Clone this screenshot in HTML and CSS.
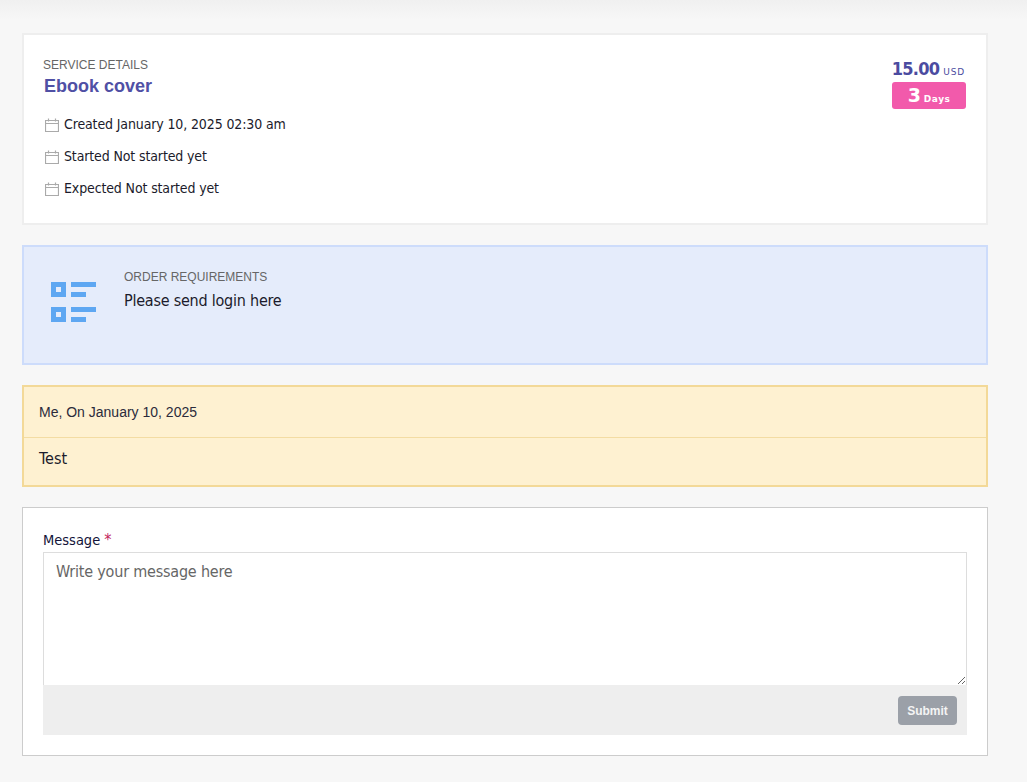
FILE: index.html
```html
<!DOCTYPE html>
<html lang="en">
<head>
<meta charset="utf-8">
<title>Order details</title>
<link rel="stylesheet" href="styles.css">
</head>
<body>
<main class="page">
  <section class="card service">
    <div class="service-main">
      <div class="eyebrow eyebrow-service">SERVICE DETAILS</div>
      <h1 class="service-title">Ebook cover</h1>
      <ul class="dates">
        <li class="date-row"><svg class="cal" viewBox="0 0 14 14" aria-hidden="true"><path d="M.5 2.5h13v11H.5zM.5 5.5h13M3.5 .5v3M10.5 .5v3"/></svg>Created January 10, 2025 02:30 am</li>
        <li class="date-row"><svg class="cal" viewBox="0 0 14 14" aria-hidden="true"><path d="M.5 2.5h13v11H.5zM.5 5.5h13M3.5 .5v3M10.5 .5v3"/></svg>Started Not started yet</li>
        <li class="date-row"><svg class="cal" viewBox="0 0 14 14" aria-hidden="true"><path d="M.5 2.5h13v11H.5zM.5 5.5h13M3.5 .5v3M10.5 .5v3"/></svg>Expected Not started yet</li>
      </ul>
    </div>
    <div class="price-box">
      <div class="price"><span class="amount">15.00</span><span class="currency">USD</span></div>
      <div class="days"><span class="days-num">3</span><span class="days-label">Days</span></div>
    </div>
  </section>

  <section class="requirements">
    <svg class="req-icon" viewBox="0 0 45 42" aria-hidden="true">
      <path fill-rule="evenodd" d="M0 0h15v15H0zM5 5v5h5V5zM0 25h15v15H0zM5 30v5h5v-5z"/>
      <path d="M20 0h25v5H20zM20 10h15v5H20zM20 25h25v5H20zM20 35h15v5H20z"/>
    </svg>
    <div class="req-body">
      <div class="eyebrow">ORDER REQUIREMENTS</div>
      <p class="req-text">Please send login here</p>
    </div>
  </section>

  <section class="note">
    <div class="note-head">Me, On January 10, 2025</div>
    <div class="note-body">Test</div>
  </section>

  <form class="reply">
    <label class="reply-label" for="msg">Message <span class="req-star">*</span></label>
    <textarea class="reply-input" id="msg" placeholder="Write your message here"></textarea>
    <div class="reply-bar"><button class="submit" type="button">Submit</button></div>
  </form>
</main>
</body>
</html>
```

FILE: styles.css
```css
* { box-sizing: border-box; }
html, body { margin: 0; height: 100%; }
body {
  background: #f7f7f7 linear-gradient(#f0f0f0, #f7f7f7 20px) no-repeat;
  color: #1b1b2b;
  font-family: "DejaVu Sans", "Noto Sans", sans-serif;
  font-stretch: condensed;
  font-size: 14px;
}
.page {
  width: 988px;
  padding: 33px 0 0 22px;
  display: flex;
  flex-direction: column;
  gap: 20px;
}
.card {
  background: #fff;
  border: 2px solid #eeeeee;
}
.service {
  height: 192px;
  padding: 22px 20px 0;
  display: flex;
  justify-content: space-between;
}
.eyebrow {
  font-family: "Liberation Sans", Arial, sans-serif;
  font-size: 12px;
  line-height: 16px;
  color: #666;
}
.eyebrow-service { margin-left: -1px; }
.service-title {
  margin: 3px 0 0;
  font-family: "Liberation Sans", Arial, sans-serif;
  font-size: 18px;
  line-height: 20px;
  font-weight: 700;
  color: #5050a5;
}
.dates { list-style: none; margin: 12px 0 0; padding: 0; }
.date-row {
  display: flex;
  align-items: center;
  height: 32px;
  gap: 5px;
  padding-left: 1px;
  letter-spacing: -.13px;
}
.cal { width: 14px; height: 14px; fill: none; stroke: #aaa; stroke-width: 1.2; margin-top: 1px; }
.price-box { width: 74px; }
.price {
  display: flex;
  justify-content: flex-end;
  align-items: baseline;
  gap: 4px;
  height: 25px;
  padding: 1px 1px 0 0;
  color: #4b4ba0;
  line-height: 21px;
  white-space: nowrap;
}
.amount { font-size: 18px; font-weight: 700; letter-spacing: -.7px; }
.currency { font-size: 9px; letter-spacing: .8px; font-stretch: normal; }
.days {
  height: 27px;
  background: #f25aab;
  border-radius: 3px;
  color: #fff;
  display: flex;
  justify-content: center;
  align-items: baseline;
  gap: 3px;
  line-height: 26px;
  font-weight: 700;
  font-stretch: normal;
}
.days-num { font-size: 19px; }
.days-label { font-size: 9px; letter-spacing: .5px; }
.requirements {
  height: 120px;
  background: #e5ecfb;
  border: 2px solid #cddcfb;
  padding: 22px 20px 0 27px;
  display: flex;
  gap: 28px;
}
.req-icon { width: 45px; height: 42px; margin-top: 13px; fill: #5ea7f2; flex: none; }
.req-text { margin: 5px 0 0; font-size: 16px; line-height: 22px; letter-spacing: -.23px; color: #1b1b2b; }
.note {
  background: #fef1d1;
  border: 2px solid #f3d998;
}
.note-head {
  height: 51px;
  padding: 0 15px;
  display: flex;
  align-items: center;
  border-bottom: 1px solid #f3dca3;
  font-family: "Liberation Sans", Arial, sans-serif;
  font-size: 14px;
  color: #2b2b3b;
}
.note-body { height: 47px; padding: 10px 15px 0; font-size: 16px; line-height: 22px; }
.reply {
  height: 249px;
  background: #fff;
  border: 1px solid #cccccc;
  padding: 21px 20px 20px;
  display: flex;
  flex-direction: column;
}
.reply-label { font-size: 14.5px; line-height: 22px; margin-bottom: 1px; color: #14143a; }
.req-star { color: #c2255c; font-size: 16px; }
.reply-input {
  display: block;
  width: 100%;
  height: 133px;
  flex: none;
  border: 1px solid #dddddd;
  border-bottom: 0;
  padding: 8px 12px;
  font-family: "DejaVu Sans", "Noto Sans", sans-serif;
  font-stretch: condensed;
  font-size: 16px;
  letter-spacing: -.2px;
  line-height: 22px;
  color: #333;
  background: #fff;
  outline: none;
  resize: vertical;
}
.reply-input::placeholder { color: #666; opacity: 1; }
.reply-bar {
  height: 50px;
  background: #eeeeee;
  display: flex;
  justify-content: flex-end;
  align-items: flex-start;
  padding: 11px 10px 0;
}
.submit {
  width: 59px;
  height: 29px;
  border: 0;
  border-radius: 4px;
  background: #9ba0a8;
  color: #f4f4f4;
  font-family: "Liberation Sans", Arial, sans-serif;
  font-size: 12px;
  font-weight: 700;
  padding: 0;
}
```
